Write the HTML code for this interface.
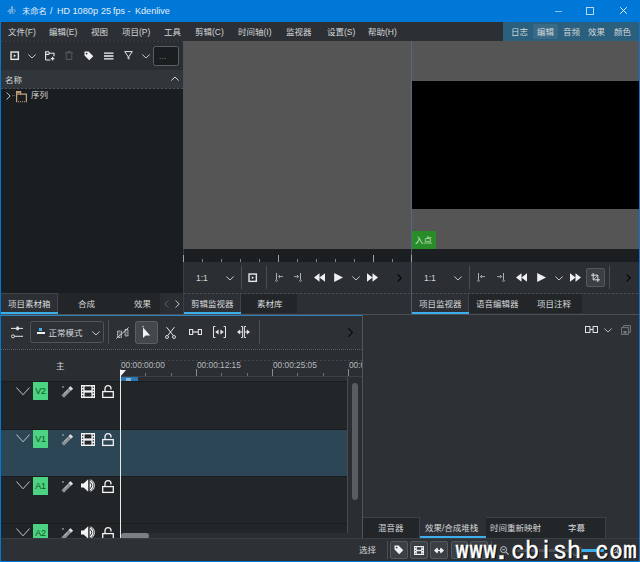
<!DOCTYPE html>
<html lang="zh-CN">
<head>
<meta charset="utf-8">
<title>未命名 / HD 1080p 25 fps - Kdenlive</title>
<style>
*{box-sizing:border-box;margin:0;padding:0}
html,body{width:640px;height:562px;overflow:hidden;background:#2c3034}
body{position:relative;font-family:"Liberation Sans","Noto Sans CJK SC",sans-serif;font-size:8.5px;color:#d4d7d9;line-height:1}
.abs{position:absolute}
.t{position:absolute;white-space:nowrap;line-height:10px;height:10px}
svg{position:absolute;overflow:visible}
/* title */
#title{left:0;top:0;width:640px;height:22px;background:#0078d7}
/* menu */
#menu{left:0;top:22px;width:640px;height:19px;background:#2c3034}
#ws{left:503px;top:22px;width:136px;height:19px;background:#2a5f7d}
/* frame */
#lb{left:0;top:22px;width:1px;height:540px;background:#0078d7}
#rb{left:639px;top:22px;width:1px;height:540px;background:#1572c4}
#bb{left:0;top:560.5px;width:640px;height:1.5px;background:#0078d7}
/* bin */
#bintb{left:1px;top:41px;width:182px;height:29px;background:#2a2e32}
#binhd{left:1px;top:70px;width:182px;height:19px;background:#31363b}
#bintree{left:1px;top:89px;width:182px;height:204px;background:#1b1e20}
#bintabs{left:1px;top:293px;width:182px;height:21px;background:#232629}
.tab{position:absolute;top:293px;height:21px;background:#2c3034;border-top:1px solid #3f444a;border-right:1px solid #3f444a}
.tabu{position:absolute;height:2px;background:#3daee9;top:311.5px}
.itab{position:absolute;top:294px;height:19px;background:#232629}
/* monitors */
.mon{position:absolute;top:41px;height:208px;background:#555555}
.rul{position:absolute;top:249px;height:13px;background:#1c1f22}
.mtb{position:absolute;top:262px;height:31px;background:#2b2f33}
.sep{position:absolute;width:1px;background:#4a4f54}
.tick{position:absolute;width:1px;background:#7f8386}
/* timeline */
#tl{left:1px;top:316px;width:361px;height:222px;background:#2a2e32}
#tltb{left:1px;top:316px;width:361px;height:33px;background:#2d3135}
#tracks{left:120px;top:381px;width:228px;height:157px;background:#232629}
.trk{position:absolute;left:1px;width:347px}
.tag{position:absolute;left:33px;width:15px;height:18px;background:#4bd282;color:#0f5a20;font-size:9px;text-align:center;line-height:19.5px;letter-spacing:-0.3px}
/* right */
#rp{left:363px;top:316px;width:276px;height:222px;background:#2d3135}
#sb{left:1px;top:538px;width:638px;height:23px;background:#2d3135}
.btn{position:absolute;background:#3b4045;border:1px solid #54595e;border-radius:2px}
</style>
</head>
<body>
<!-- TITLE BAR -->
<div id="title" class="abs"></div>
<svg style="left:6px;top:5px" width="11" height="10" viewBox="0 0 11 10"><path d="M1 6.4L3.2 4.6L2.8 3.4L4.2 4.2L5 3.6V1.2H7V3.8L9.4 4.8L10 6.2L8.6 7.8L7 9H2.8L3.8 7.6L1 6.8Z" fill="#5ea9e2"/><rect x="5.3" y="1.9" width="1.4" height="1.2" fill="#c9a98a"/><path d="M7.2 5L8.6 6.2L7.2 7.4" fill="none" stroke="#1d4f8a" stroke-width="0.9"/><rect x="5.2" y="7.6" width="1" height="1" fill="#1d4f8a"/></svg>
<div class="t" style="left:22px;top:6px;font-size:8.3px;color:#e4effa">未命名</div><div class="t" style="left:50px;top:6px;font-size:9px;color:#e4effa">/</div><div class="t" style="left:57px;top:6px;font-size:9px;color:#e4effa">HD</div><div class="t" style="left:72.5px;top:6px;font-size:9.2px;color:#e4effa">1080p</div><div class="t" style="left:101px;top:6px;font-size:9px;color:#e4effa">25</div><div class="t" style="left:113px;top:6px;font-size:9px;color:#e4effa">fps</div><div class="t" style="left:127.5px;top:6px;font-size:9px;color:#e4effa">-</div><div class="t" style="left:135px;top:6px;font-size:9.1px;color:#e4effa">Kdenlive</div>
<svg style="left:555px;top:10.5px" width="7" height="1" viewBox="0 0 7 1"><rect width="7" height="0.8" fill="#b5d4f1"/></svg>
<svg style="left:586px;top:6.5px" width="8" height="8" viewBox="0 0 8 8"><rect x="0.5" y="0.5" width="7" height="7" fill="none" stroke="#cfe3f6" stroke-width="0.9"/></svg>
<svg style="left:619.5px;top:7px" width="7" height="7" viewBox="0 0 7 7"><path d="M0.2 0.2L6.8 6.8M6.8 0.2L0.2 6.8" stroke="#ffffff" stroke-width="0.9"/></svg>
<!-- MENU -->
<div id="menu" class="abs"></div>
<div id="ws" class="abs"></div>
<div class="t" style="left:8px;top:27px">文件(F)</div>
<div class="t" style="left:49px;top:27px">编辑(E)</div>
<div class="t" style="left:91px;top:27px">视图</div>
<div class="t" style="left:122px;top:27px">项目(P)</div>
<div class="t" style="left:164px;top:27px">工具</div>
<div class="t" style="left:195px;top:27px">剪辑(C)</div>
<div class="t" style="left:238px;top:27px">时间轴(I)</div>
<div class="t" style="left:286px;top:27px">监视器</div>
<div class="t" style="left:327px;top:27px">设置(S)</div>
<div class="t" style="left:368px;top:27px">帮助(H)</div>
<div class="abs" style="left:533px;top:24px;width:25px;height:15px;background:rgba(255,255,255,.07);border-radius:2px"></div>
<div class="t" style="left:511px;top:27px">日志</div>
<div class="t" style="left:537px;top:27px">编辑</div>
<div class="t" style="left:563px;top:27px">音频</div>
<div class="t" style="left:588px;top:27px">效果</div>
<div class="t" style="left:614px;top:27px">颜色</div>

<!-- BIN -->
<div id="bintb" class="abs"></div>
<div id="binhd" class="abs"></div>
<div id="bintree" class="abs"></div>
<div id="bintabs" class="abs"></div>
<div class="abs" style="left:1px;top:88px;width:182px;height:1px;background:repeating-linear-gradient(90deg,#4d5257 0 2px,#2a2e32 2px 4px)"></div>
<div class="t" style="left:5px;top:75.2px">名称</div>
<div class="t" style="left:31px;top:90px">序列</div>
<div class="tab" style="left:1px;width:57px"></div>
<div class="tabu" style="left:1px;width:57px"></div>
<div class="abs" style="left:160px;top:293px;width:23px;height:21px;background:#2a2e32"></div>
<div class="t" style="left:8px;top:299px">项目素材箱</div>
<div class="t" style="left:78px;top:299px">合成</div>
<div class="t" style="left:134px;top:299px">效果</div>


<!-- bin toolbar icons -->
<div class="abs" style="left:1px;top:41px;width:182px;height:1px;background:repeating-linear-gradient(90deg,#3a3f44 0 2px,#25282b 2px 4px)"></div>
<svg style="left:10.2px;top:50.7px" width="9.4" height="9.4" viewBox="0 0 10 10"><rect x="1.1" y="1.1" width="7.8" height="7.8" fill="none" stroke="#e6e7e8" stroke-width="1.5"/><path d="M4 3.4L6.4 5L4 6.6Z" fill="#e6e7e8"/></svg>
<svg style="left:28px;top:53.5px" width="8" height="5" viewBox="0 0 8 5"><path d="M0.3 0.5L4 4L7.7 0.5" fill="none" stroke="#c4c6c8" stroke-width="1"/></svg>
<svg style="left:44.5px;top:50.5px" width="10" height="10" viewBox="0 0 10 10"><path d="M0.6 9V0.8H3.6L4.6 2.2H9V5.2M0.6 3.4H3.6L4.6 2.2M0.6 9H5.4" fill="none" stroke="#e6e7e8" stroke-width="1.1"/><path d="M7.6 5.8V9.4M5.8 7.6H9.4" stroke="#e6e7e8" stroke-width="1.1" fill="none"/></svg>
<svg style="left:65px;top:51px" width="8" height="9" viewBox="0 0 8 9"><path d="M0 1.8H8M2.8 1.8V0.5H5.2V1.8M1.2 1.8V8.5H6.8V1.8" fill="none" stroke="#565b60" stroke-width="1"/></svg>
<svg style="left:84px;top:50.5px" width="10" height="10" viewBox="0 0 10 10"><path d="M0.5 0.5H4.6L9.3 5.2L5.2 9.3L0.5 4.6Z" fill="#f0f1f2"/><circle cx="2.6" cy="2.6" r="0.9" fill="#2a2e32"/></svg>
<svg style="left:104px;top:51.5px" width="10" height="8" viewBox="0 0 10 8"><path d="M0 1.1H9.5M0 4H9.5M0 6.9H9.5" stroke="#f0f1f2" stroke-width="1.3" fill="none"/></svg>
<svg style="left:124px;top:51px" width="9" height="9" viewBox="0 0 9 9"><path d="M0.7 0.6H8.3L4.9 5.6V8.2L4.1 7.4V5.6Z" fill="none" stroke="#e6e7e8" stroke-width="1"/></svg>
<svg style="left:142px;top:53.5px" width="8" height="5" viewBox="0 0 8 5"><path d="M0.3 0.5L4 4L7.7 0.5" fill="none" stroke="#c4c6c8" stroke-width="1"/></svg>
<div class="abs" style="left:153px;top:46px;width:26px;height:20px;background:#1b1e20;border:1px solid #5a5f64;border-radius:2.5px"></div>
<div class="t" style="left:159px;top:52px;color:#9aa0a5;font-size:8px;letter-spacing:0.3px">...</div>
<!-- header caret -->
<svg style="left:171px;top:76px" width="8" height="5" viewBox="0 0 8 5"><path d="M0.3 4.5L4 1L7.7 4.5" fill="none" stroke="#d0d2d4" stroke-width="1"/></svg>
<!-- tree row -->
<svg style="left:6px;top:91.5px" width="5" height="8" viewBox="0 0 5 8"><path d="M0.5 0.4L4.2 4L0.5 7.6" fill="none" stroke="#c4c6c8" stroke-width="1"/></svg>
<div class="abs" style="left:12px;top:95px;width:3px;height:1px;background:#4c5156"></div>
<svg style="left:16.2px;top:90.8px" width="11" height="11.4" viewBox="0 0 11 11.4"><path d="M0.6 10.8V0.7H4.6V3.1H10.4V10.8" fill="none" stroke="#c4a07a" stroke-width="1.2"/><path d="M0.6 3.1H4.6" stroke="#c4a07a" stroke-width="1.2"/><path d="M0.6 1.3H4.6" stroke="#c4a07a" stroke-width="1.2"/><path d="M0 10.8H11" stroke="#c4a07a" stroke-width="1.1" stroke-dasharray="1.1 0.9"/></svg>
<!-- tab arrows -->
<svg style="left:164px;top:299.5px" width="5" height="8" viewBox="0 0 5 8"><path d="M4.4 0.4L0.8 4L4.4 7.6" fill="none" stroke="#5e6368" stroke-width="1"/></svg>
<svg style="left:175px;top:299.5px" width="5" height="8" viewBox="0 0 5 8"><path d="M0.6 0.4L4.2 4L0.6 7.6" fill="none" stroke="#c4c6c8" stroke-width="1"/></svg>

<!-- CLIP MONITOR -->
<div class="abs" style="left:183px;top:41px;width:1px;height:208px;background:#4a5563;z-index:2"></div>
<div class="abs" style="left:183px;top:249px;width:1px;height:65px;background:#3a3f45;z-index:2"></div>
<div class="mon" style="left:183px;width:228px"></div>
<div class="rul" style="left:183px;width:228px"></div>
<div class="mtb" style="left:183px;width:228px"></div>
<div class="tick" style="left:183.3px;top:255px;height:7px;background:#a0a3a6;z-index:3"></div><div class="tick" style="left:202.2px;top:259px;height:3px;background:#7f8386;z-index:3"></div><div class="tick" style="left:221.2px;top:259px;height:3px;background:#7f8386;z-index:3"></div><div class="tick" style="left:240.1px;top:259px;height:3px;background:#7f8386;z-index:3"></div><div class="tick" style="left:259.0px;top:259px;height:3px;background:#7f8386;z-index:3"></div><div class="tick" style="left:278.0px;top:255px;height:7px;background:#a0a3a6;z-index:3"></div><div class="tick" style="left:296.9px;top:259px;height:3px;background:#7f8386;z-index:3"></div><div class="tick" style="left:315.8px;top:259px;height:3px;background:#7f8386;z-index:3"></div><div class="tick" style="left:334.7px;top:259px;height:3px;background:#7f8386;z-index:3"></div><div class="tick" style="left:353.7px;top:259px;height:3px;background:#7f8386;z-index:3"></div><div class="tick" style="left:372.6px;top:255px;height:7px;background:#a0a3a6;z-index:3"></div><div class="tick" style="left:391.5px;top:259px;height:3px;background:#7f8386;z-index:3"></div><div class="tick" style="left:410.5px;top:255px;height:7px;background:#a0a3a6;z-index:3"></div>
<div class="t" style="left:196px;top:273px">1:1</div>
<svg style="left:225.5px;top:275.5px" width="8" height="5" viewBox="0 0 8 5"><path d="M0.3 0.5L4 4L7.7 0.5" fill="none" stroke="#c4c6c8" stroke-width="1"/></svg>
<div class="sep" style="left:241px;top:266px;height:23px"></div>
<svg style="left:248.4px;top:272.7px" width="9.4" height="9.4" viewBox="0 0 10 10"><rect x="1.1" y="1.1" width="7.8" height="7.8" fill="none" stroke="#e6e7e8" stroke-width="1.5"/><path d="M4 3.4L6.4 5L4 6.6Z" fill="#e6e7e8"/></svg>
<div class="sep" style="left:266px;top:266px;height:23px"></div>
<svg style="left:274.5px;top:273px" width="10" height="9" viewBox="0 0 10 9"><path d="M1.5 0V6.6" stroke="#aeb2b5" stroke-width="1" fill="none"/><circle cx="1.5" cy="7.6" r="0.9" fill="none" stroke="#aeb2b5" stroke-width="0.8"/><path d="M3.4 3.6H8 M5 2L3.4 3.6L5 5.2" stroke="#aeb2b5" stroke-width="0.9" fill="none"/></svg>
<svg style="left:292.0px;top:273px" width="10" height="9" viewBox="0 0 10 9"><path d="M8.5 0V6.6" stroke="#aeb2b5" stroke-width="1" fill="none"/><circle cx="8.5" cy="7.6" r="0.9" fill="none" stroke="#aeb2b5" stroke-width="0.8"/><path d="M2 3.6H6.6 M5 2L6.6 3.6L5 5.2" stroke="#aeb2b5" stroke-width="0.9" fill="none"/></svg>
<svg style="left:313.5px;top:273px" width="11" height="9" viewBox="0 0 11 9"><path d="M5.5 0.3V8.7L0 4.5Z M11 0.3V8.7L5.5 4.5Z" fill="#eff0f1"/></svg>
<svg style="left:333.5px;top:273px" width="9" height="9" viewBox="0 0 9 9"><path d="M0.2 0V9L9 4.5Z" fill="#eff0f1"/></svg>
<svg style="left:352px;top:275.5px" width="8" height="5" viewBox="0 0 8 5"><path d="M0.3 0.5L4 4L7.7 0.5" fill="none" stroke="#c4c6c8" stroke-width="1"/></svg>
<svg style="left:367px;top:273px" width="11" height="9" viewBox="0 0 11 9"><path d="M0 0.3V8.7L5.5 4.5Z M5.5 0.3V8.7L11 4.5Z" fill="#eff0f1"/></svg>
<svg style="left:396.5px;top:274px" width="5" height="8" viewBox="0 0 5 8"><path d="M0.6 0.4L4.2 4L0.6 7.6" fill="none" stroke="#050505" stroke-width="1.1"/></svg>
<div class="itab" style="left:241px;width:56px"></div>
<div class="tab" style="left:184px;width:57px"></div>
<div class="tabu" style="left:183.5px;width:57px"></div>
<div class="t" style="left:191px;top:299px">剪辑监视器</div>
<div class="t" style="left:257px;top:299px">素材库</div>

<!-- PROJECT MONITOR -->
<div class="mon" style="left:411px;width:228px"></div>
<div class="abs" style="left:411px;top:41px;width:1px;height:208px;background:#586880;z-index:2"></div><div class="abs" style="left:411px;top:249px;width:1px;height:65px;background:#555a60;z-index:2"></div>
<div class="abs" style="left:412px;top:81px;width:227px;height:128px;background:#000"></div>
<div class="abs" style="left:412px;top:231px;width:24px;height:18px;background:#288c28"></div>
<div class="t" style="left:415px;top:235px;color:#cfe8cf">入点</div>
<div class="rul" style="left:412px;width:227px"></div>
<div class="mtb" style="left:412px;width:227px"></div>
<div class="t" style="left:424px;top:273px">1:1</div>
<svg style="left:453.5px;top:275.5px" width="8" height="5" viewBox="0 0 8 5"><path d="M0.3 0.5L4 4L7.7 0.5" fill="none" stroke="#c4c6c8" stroke-width="1"/></svg>
<div class="sep" style="left:468.5px;top:266px;height:23px"></div>
<svg style="left:477.0px;top:273px" width="10" height="9" viewBox="0 0 10 9"><path d="M1.5 0V6.6" stroke="#aeb2b5" stroke-width="1" fill="none"/><circle cx="1.5" cy="7.6" r="0.9" fill="none" stroke="#aeb2b5" stroke-width="0.8"/><path d="M3.4 3.6H8 M5 2L3.4 3.6L5 5.2" stroke="#aeb2b5" stroke-width="0.9" fill="none"/></svg>
<svg style="left:495.0px;top:273px" width="10" height="9" viewBox="0 0 10 9"><path d="M8.5 0V6.6" stroke="#aeb2b5" stroke-width="1" fill="none"/><circle cx="8.5" cy="7.6" r="0.9" fill="none" stroke="#aeb2b5" stroke-width="0.8"/><path d="M2 3.6H6.6 M5 2L6.6 3.6L5 5.2" stroke="#aeb2b5" stroke-width="0.9" fill="none"/></svg>
<svg style="left:516px;top:273px" width="11" height="9" viewBox="0 0 11 9"><path d="M5.5 0.3V8.7L0 4.5Z M11 0.3V8.7L5.5 4.5Z" fill="#eff0f1"/></svg>
<svg style="left:536.5px;top:273px" width="9" height="9" viewBox="0 0 9 9"><path d="M0.2 0V9L9 4.5Z" fill="#eff0f1"/></svg>
<svg style="left:554.5px;top:275.5px" width="8" height="5" viewBox="0 0 8 5"><path d="M0.3 0.5L4 4L7.7 0.5" fill="none" stroke="#c4c6c8" stroke-width="1"/></svg>
<svg style="left:569.5px;top:273px" width="11" height="9" viewBox="0 0 11 9"><path d="M0 0.3V8.7L5.5 4.5Z M5.5 0.3V8.7L11 4.5Z" fill="#eff0f1"/></svg>
<div class="btn" style="left:586px;top:268px;width:18.5px;height:18.5px"></div>
<svg style="left:591px;top:273px" width="9" height="9" viewBox="0 0 10 10"><path d="M2.4 0V7.6H10 M0 2.4H7.6V10" fill="none" stroke="#eff0f1" stroke-width="1"/><path d="M3 7L7 3" stroke="#eff0f1" stroke-width="0.7"/></svg>
<div class="sep" style="left:609px;top:266px;height:23px"></div>
<svg style="left:625.5px;top:274px" width="5" height="8" viewBox="0 0 5 8"><path d="M0.6 0.4L4.2 4L0.6 7.6" fill="none" stroke="#050505" stroke-width="1.1"/></svg>
<div class="itab" style="left:469px;width:113px"></div>
<div class="tab" style="left:412px;width:57px"></div>
<div class="tabu" style="left:412px;width:57px"></div>
<div class="t" style="left:419px;top:299px">项目监视器</div>
<div class="t" style="left:476px;top:299px">语音编辑器</div>
<div class="t" style="left:537px;top:299px">项目注释</div>

<!-- separator line -->
<div class="abs" style="left:184px;top:293px;width:455px;height:1px;background:repeating-linear-gradient(90deg,#474c51 0 2px,#33383c 2px 4px);z-index:1"></div>
<div class="abs" style="left:0;top:314px;width:640px;height:1px;background:#4b5055"></div>
<div class="abs" style="left:0;top:315px;width:362px;height:1px;background:#2a82be"></div>
<div class="abs" style="left:362px;top:315px;width:278px;height:1px;background:#2d3135"></div>

<!-- TIMELINE -->
<div id="tl" class="abs"></div>
<div id="tltb" class="abs"></div>
<div class="abs" style="left:362px;top:315px;width:1px;height:223px;background:#50555a"></div>
<svg style="left:11px;top:325px" width="12" height="14" viewBox="0 0 12 14"><path d="M0 3.4H12" stroke="#e6e7e8" stroke-width="1"/><rect x="5.4" y="1.6" width="2.4" height="3.6" fill="#e6e7e8"/><path d="M3.5 11.3H12" stroke="#e6e7e8" stroke-width="1"/><circle cx="2" cy="11.3" r="1.5" fill="none" stroke="#e6e7e8" stroke-width="0.9"/></svg>
<div class="abs" style="left:30px;top:321px;width:74px;height:22px;background:#2e3236;border:1px solid #50555a;border-radius:2.5px"></div>
<div class="abs" style="left:39px;top:327.5px;width:3px;height:3px;background:#3daee9"></div>
<div class="abs" style="left:36.5px;top:332px;width:8px;height:2px;background:#eff0f1"></div>
<div class="t" style="left:48.5px;top:327.5px">正常模式</div>
<svg style="left:92px;top:330.5px" width="8" height="5" viewBox="0 0 8 5" preserveAspectRatio="none"><path d="M0.3 0.5L4 4L7.7 0.5" fill="none" stroke="#c4c6c8" stroke-width="1"/></svg>
<div class="sep" style="left:107.5px;top:320px;height:24px"></div>
<svg style="left:116px;top:326.5px" width="13" height="12" viewBox="0 0 13 12"><path d="M1.5 4H5.5V10.5H1.5Z M9 2.5H12V9H9Z" fill="rgba(200,203,206,.25)" stroke="#c0c3c6" stroke-width="1" stroke-dasharray="1.2 0.5"/><path d="M0.3 11.5L12.7 0.5" stroke="#c8cacc" stroke-width="1"/></svg>
<div class="btn" style="left:135px;top:321px;width:23px;height:22.5px;background:#43484d;border-color:#5b6065;border-radius:2.5px"></div>
<svg style="left:142px;top:325.5px" width="9" height="13" viewBox="0 0 9 13"><path d="M1 1.6V12L3.6 9.4H8.2Z" fill="#f4f5f6"/><rect x="0.4" y="0" width="1.2" height="1.2" fill="#e0e0e0"/></svg>
<svg style="left:165px;top:326.5px" width="11" height="12" viewBox="0 0 11 12"><path d="M1.6 0.2L8.3 8.6 M9.4 0.2L2.7 8.6" stroke="#e6e7e8" stroke-width="1" fill="none"/><circle cx="2" cy="10" r="1.5" fill="none" stroke="#e6e7e8" stroke-width="0.9"/><circle cx="9" cy="10" r="1.5" fill="none" stroke="#e6e7e8" stroke-width="0.9"/></svg>
<svg style="left:188.5px;top:329px" width="13" height="6" viewBox="0 0 13 6"><rect x="0.5" y="0.5" width="3.2" height="5" fill="none" stroke="#e6e7e8" stroke-width="1"/><rect x="9.3" y="0.5" width="3.2" height="5" fill="none" stroke="#e6e7e8" stroke-width="1"/><path d="M3.7 3H9.3" stroke="#e6e7e8" stroke-width="1.2"/></svg>
<svg style="left:213px;top:326px" width="13" height="12" viewBox="0 0 13 12"><path d="M2.4 0.5H0.5V11.5H2.4 M10.6 0.5H12.5V11.5H10.6" fill="none" stroke="#e6e7e8" stroke-width="1"/><path d="M2.2 6L5.6 3.4V8.6Z M10.8 6L7.4 3.4V8.6Z" fill="#e6e7e8"/></svg>
<svg style="left:237px;top:326px" width="13" height="12" viewBox="0 0 13 12"><path d="M4 0.5H5.6V11.5H4 M9 0.5H7.4V11.5H9" fill="none" stroke="#e6e7e8" stroke-width="1"/><path d="M0 6L3.2 3.4V8.6Z M13 6L9.8 3.4V8.6Z" fill="#e6e7e8"/><path d="M2 6H5.4 M7.6 6H11" stroke="#e6e7e8" stroke-width="1"/></svg>
<div class="sep" style="left:258.5px;top:320px;height:24px"></div>
<svg style="left:347.5px;top:328px" width="5" height="9" viewBox="0 0 5 9"><path d="M0.5 0.4L4.3 4.5L0.5 8.6" fill="none" stroke="#050505" stroke-width="1.1"/></svg>
<div class="abs" style="left:1px;top:348.5px;width:361px;height:1px;background:repeating-linear-gradient(90deg,#5a5f64 0 1px,#2a2e32 1px 2px)"></div>
<div class="abs" style="left:120px;top:360px;width:242px;height:17px;background:#2b2f33"></div>
<div class="abs" style="left:120px;top:360px;width:242px;height:1px;background:repeating-linear-gradient(90deg,#43484d 0 2px,#2a2e32 2px 4px)"></div>
<div class="abs" style="left:120px;top:376px;width:242px;height:1px;background:#3b4045"></div>
<div class="abs" style="left:120px;top:369px;width:1px;height:7px;background:#8a8e92"></div>
<div class="t" style="left:121px;top:359.8px;color:#b9bcbf;font-size:8.3px;width:60px;overflow:hidden">00:00:00:00</div>
<div class="abs" style="left:145.3px;top:373px;width:1px;height:3px;background:#6d7176"></div>
<div class="abs" style="left:170.7px;top:373px;width:1px;height:3px;background:#6d7176"></div>
<div class="abs" style="left:196px;top:369px;width:1px;height:7px;background:#8a8e92"></div>
<div class="t" style="left:197px;top:359.8px;color:#b9bcbf;font-size:8.3px;width:60px;overflow:hidden">00:00:12:15</div>
<div class="abs" style="left:221.3px;top:373px;width:1px;height:3px;background:#6d7176"></div>
<div class="abs" style="left:246.7px;top:373px;width:1px;height:3px;background:#6d7176"></div>
<div class="abs" style="left:272px;top:369px;width:1px;height:7px;background:#8a8e92"></div>
<div class="t" style="left:273px;top:359.8px;color:#b9bcbf;font-size:8.3px;width:60px;overflow:hidden">00:00:25:05</div>
<div class="abs" style="left:297.3px;top:373px;width:1px;height:3px;background:#6d7176"></div>
<div class="abs" style="left:322.7px;top:373px;width:1px;height:3px;background:#6d7176"></div>
<div class="abs" style="left:348px;top:369px;width:1px;height:7px;background:#8a8e92"></div>
<div class="t" style="left:349px;top:359.8px;color:#b9bcbf;font-size:8.3px;width:13px;overflow:hidden">00:00:37:20</div>
<div class="abs" style="left:121px;top:377px;width:17px;height:4.5px;background:#2b78b4"></div>
<div class="abs" style="left:126px;top:378px;width:5px;height:3px;background:#9fc4df;opacity:.8"></div>
<div class="abs" style="left:1px;top:381px;width:119px;height:47.5px;background:#222528;overflow:hidden"></div>
<div class="abs" style="left:120px;top:381px;width:226.5px;height:47.5px;background:#232629"></div>
<div class="abs" style="left:1px;top:381px;width:345.5px;height:1px;background:#1a1c1e"></div>
<div class="abs" style="left:0;top:381px;width:130px;height:47.5px;overflow:hidden">
<svg style="left:16px;top:5.5px" width="14" height="9" viewBox="0 0 14 9"><path d="M0.4 0.5L7 7.8L13.6 0.5" fill="none" stroke="#c4c6c8" stroke-width="1"/></svg>
<div class="tag" style="top:1px">V2</div>
<svg style="left:61px;top:4px" width="13" height="13" viewBox="0 0 13 13"><path d="M0.4 10.2L9.4 1.2L12 3.8L3 12.8Z" fill="#8b9095"/><path d="M7.6 3L9.4 1.2L12 3.8L10.2 5.6Z" fill="#dcdedf"/><path d="M3.4 8.6L6.6 5.4" stroke="#c9cccf" stroke-width="0.8"/><rect x="1.2" y="1.2" width="1.5" height="1.5" fill="#a9adb0"/></svg>
<svg style="left:80.5px;top:4px" width="14" height="13" viewBox="0 0 14 13"><rect x="0" y="0" width="14" height="13" fill="#f2f3f4"/><rect x="3.6" y="1.4" width="6.8" height="4" fill="#26292c"/><rect x="3.6" y="7.6" width="6.8" height="4" fill="#26292c"/><g fill="#26292c"><rect x="1.1" y="1.6" width="1.2" height="1.4"/><rect x="1.1" y="4.4" width="1.2" height="1.4"/><rect x="1.1" y="7.2" width="1.2" height="1.4"/><rect x="1.1" y="10" width="1.2" height="1.4"/><rect x="11.7" y="1.6" width="1.2" height="1.4"/><rect x="11.7" y="4.4" width="1.2" height="1.4"/><rect x="11.7" y="7.2" width="1.2" height="1.4"/><rect x="11.7" y="10" width="1.2" height="1.4"/></g></svg>
<svg style="left:101.5px;top:4px" width="12" height="13" viewBox="0 0 12 13"><rect x="0.7" y="6.6" width="10.6" height="5.8" fill="none" stroke="#f2f3f4" stroke-width="1.3"/><path d="M3 6.6V3.6A3 3 0 0 1 9 3.6V4.4" fill="none" stroke="#f2f3f4" stroke-width="1.3"/></svg>
</div>
<div class="abs" style="left:1px;top:428.5px;width:119px;height:47px;background:#2c4656;overflow:hidden"></div>
<div class="abs" style="left:120px;top:428.5px;width:226.5px;height:47px;background:#2c4656"></div>
<div class="abs" style="left:1px;top:428.5px;width:345.5px;height:1px;background:#1a1c1e"></div>
<div class="abs" style="left:0;top:428.5px;width:130px;height:47px;overflow:hidden">
<svg style="left:16px;top:5.5px" width="14" height="9" viewBox="0 0 14 9"><path d="M0.4 0.5L7 7.8L13.6 0.5" fill="none" stroke="#c4c6c8" stroke-width="1"/></svg>
<div class="tag" style="top:1px">V1</div>
<svg style="left:61px;top:4px" width="13" height="13" viewBox="0 0 13 13"><path d="M0.4 10.2L9.4 1.2L12 3.8L3 12.8Z" fill="#8b9095"/><path d="M7.6 3L9.4 1.2L12 3.8L10.2 5.6Z" fill="#dcdedf"/><path d="M3.4 8.6L6.6 5.4" stroke="#c9cccf" stroke-width="0.8"/><rect x="1.2" y="1.2" width="1.5" height="1.5" fill="#a9adb0"/></svg>
<svg style="left:80.5px;top:4px" width="14" height="13" viewBox="0 0 14 13"><rect x="0" y="0" width="14" height="13" fill="#f2f3f4"/><rect x="3.6" y="1.4" width="6.8" height="4" fill="#26292c"/><rect x="3.6" y="7.6" width="6.8" height="4" fill="#26292c"/><g fill="#26292c"><rect x="1.1" y="1.6" width="1.2" height="1.4"/><rect x="1.1" y="4.4" width="1.2" height="1.4"/><rect x="1.1" y="7.2" width="1.2" height="1.4"/><rect x="1.1" y="10" width="1.2" height="1.4"/><rect x="11.7" y="1.6" width="1.2" height="1.4"/><rect x="11.7" y="4.4" width="1.2" height="1.4"/><rect x="11.7" y="7.2" width="1.2" height="1.4"/><rect x="11.7" y="10" width="1.2" height="1.4"/></g></svg>
<svg style="left:101.5px;top:4px" width="12" height="13" viewBox="0 0 12 13"><rect x="0.7" y="6.6" width="10.6" height="5.8" fill="none" stroke="#f2f3f4" stroke-width="1.3"/><path d="M3 6.6V3.6A3 3 0 0 1 9 3.6V4.4" fill="none" stroke="#f2f3f4" stroke-width="1.3"/></svg>
</div>
<div class="abs" style="left:1px;top:475.5px;width:119px;height:47px;background:#222528;overflow:hidden"></div>
<div class="abs" style="left:120px;top:475.5px;width:226.5px;height:47px;background:#232629"></div>
<div class="abs" style="left:1px;top:475.5px;width:345.5px;height:1px;background:#1a1c1e"></div>
<div class="abs" style="left:0;top:475.5px;width:130px;height:47px;overflow:hidden">
<svg style="left:16px;top:5.5px" width="14" height="9" viewBox="0 0 14 9"><path d="M0.4 0.5L7 7.8L13.6 0.5" fill="none" stroke="#c4c6c8" stroke-width="1"/></svg>
<div class="tag" style="top:1px">A1</div>
<svg style="left:61px;top:4px" width="13" height="13" viewBox="0 0 13 13"><path d="M0.4 10.2L9.4 1.2L12 3.8L3 12.8Z" fill="#8b9095"/><path d="M7.6 3L9.4 1.2L12 3.8L10.2 5.6Z" fill="#dcdedf"/><path d="M3.4 8.6L6.6 5.4" stroke="#c9cccf" stroke-width="0.8"/><rect x="1.2" y="1.2" width="1.5" height="1.5" fill="#a9adb0"/></svg>
<svg style="left:80.5px;top:3.5px" width="14" height="13" viewBox="0 0 14 13"><path d="M0 4.4H2.6L7.2 0.3V12.7L2.6 8.6H0Z" fill="#f2f3f4"/><path d="M8.6 1.2A5.6 5.6 0 0 1 8.6 11.8Z" fill="#f2f3f4"/><path d="M8.6 3.2A3.6 3.6 0 0 1 8.6 9.8" fill="none" stroke="#26292c" stroke-width="1"/><path d="M9.6 0.6A6.4 6.4 0 0 1 9.6 12.4" fill="none" stroke="#f2f3f4" stroke-width="0.9"/></svg>
<svg style="left:101.5px;top:4px" width="12" height="13" viewBox="0 0 12 13"><rect x="0.7" y="6.6" width="10.6" height="5.8" fill="none" stroke="#f2f3f4" stroke-width="1.3"/><path d="M3 6.6V3.6A3 3 0 0 1 9 3.6V4.4" fill="none" stroke="#f2f3f4" stroke-width="1.3"/></svg>
</div>
<div class="abs" style="left:1px;top:522.5px;width:119px;height:15.5px;background:#222528;overflow:hidden"></div>
<div class="abs" style="left:120px;top:522.5px;width:226.5px;height:15.5px;background:#232629"></div>
<div class="abs" style="left:1px;top:522.5px;width:345.5px;height:1px;background:#1a1c1e"></div>
<div class="abs" style="left:0;top:522.5px;width:130px;height:15.5px;overflow:hidden">
<svg style="left:16px;top:5.5px" width="14" height="9" viewBox="0 0 14 9"><path d="M0.4 0.5L7 7.8L13.6 0.5" fill="none" stroke="#c4c6c8" stroke-width="1"/></svg>
<div class="tag" style="top:1px">A2</div>
<svg style="left:61px;top:4px" width="13" height="13" viewBox="0 0 13 13"><path d="M0.4 10.2L9.4 1.2L12 3.8L3 12.8Z" fill="#8b9095"/><path d="M7.6 3L9.4 1.2L12 3.8L10.2 5.6Z" fill="#dcdedf"/><path d="M3.4 8.6L6.6 5.4" stroke="#c9cccf" stroke-width="0.8"/><rect x="1.2" y="1.2" width="1.5" height="1.5" fill="#a9adb0"/></svg>
<svg style="left:80.5px;top:3.5px" width="14" height="13" viewBox="0 0 14 13"><path d="M0 4.4H2.6L7.2 0.3V12.7L2.6 8.6H0Z" fill="#f2f3f4"/><path d="M8.6 1.2A5.6 5.6 0 0 1 8.6 11.8Z" fill="#f2f3f4"/><path d="M8.6 3.2A3.6 3.6 0 0 1 8.6 9.8" fill="none" stroke="#26292c" stroke-width="1"/><path d="M9.6 0.6A6.4 6.4 0 0 1 9.6 12.4" fill="none" stroke="#f2f3f4" stroke-width="0.9"/></svg>
<svg style="left:101.5px;top:4px" width="12" height="13" viewBox="0 0 12 13"><rect x="0.7" y="6.6" width="10.6" height="5.8" fill="none" stroke="#f2f3f4" stroke-width="1.3"/><path d="M3 6.6V3.6A3 3 0 0 1 9 3.6V4.4" fill="none" stroke="#f2f3f4" stroke-width="1.3"/></svg>
</div>
<div class="abs" style="left:120px;top:370px;width:1px;height:168px;background:#e8e9ea"></div>
<svg style="left:120px;top:370px" width="6" height="7" viewBox="0 0 6 7"><path d="M0 0H6L0 7Z" fill="#f4f5f6"/></svg>
<div class="abs" style="left:346.5px;top:377px;width:15.5px;height:161px;background:#2a2e32"></div>
<div class="abs" style="left:347px;top:377px;width:1px;height:156px;background:#474c51"></div>
<div class="abs" style="left:352px;top:383px;width:5.5px;height:116.5px;background:#595d61;border-radius:3px"></div>
<div class="abs" style="left:121px;top:533px;width:226px;height:5px;background:#2a2e32"></div>
<div class="abs" style="left:120px;top:533px;width:1px;height:5px;background:#e8e9ea"></div>
<div class="abs" style="left:121px;top:533px;width:28px;height:5.5px;background:#7b7f83;border-radius:3px"></div>
<div class="t" style="left:56px;top:361px">主</div>

<!-- RIGHT PANEL -->
<div id="rp" class="abs"></div>
<svg style="left:585px;top:326px" width="13" height="7" viewBox="0 0 13 7"><rect x="0.5" y="0.5" width="4.4" height="6" fill="none" stroke="#e0e1e2" stroke-width="1"/><rect x="8.1" y="0.5" width="4.4" height="6" fill="none" stroke="#e0e1e2" stroke-width="1"/><path d="M4.9 3.5H8.1" stroke="#e0e1e2" stroke-width="1.2"/></svg>
<svg style="left:604px;top:327.5px" width="8" height="5" viewBox="0 0 8 5"><path d="M0.3 0.5L4 4L7.7 0.5" fill="none" stroke="#b4b7ba" stroke-width="1"/></svg>
<svg style="left:620.5px;top:324.5px" width="10" height="10" viewBox="0 0 10 10"><path d="M2.6 2.6V0.6H9.4V7.4H7.4" fill="none" stroke="#73787d" stroke-width="1"/><rect x="0.6" y="2.6" width="6.8" height="6.8" fill="none" stroke="#73787d" stroke-width="1"/><rect x="2.4" y="6" width="3.2" height="2.6" fill="#73787d"/></svg>
<div class="abs" style="left:363px;top:516.5px;width:57px;height:21.5px;background:#232629;border-top:1px solid #3d4247;border-right:1px solid #3d4247"></div>
<div class="abs" style="left:486px;top:516.5px;width:119.5px;height:21.5px;background:#232629;border-top:1px solid #3d4247;border-right:1px solid #3d4247"></div>
<div class="abs" style="left:420px;top:536px;width:66px;height:2px;background:#3daee9"></div>
<div class="t" style="left:378px;top:523px">混音器</div>
<div class="t" style="left:425px;top:523px">效果/合成堆栈</div>
<div class="t" style="left:490px;top:523px">时间重新映射</div>
<div class="t" style="left:568px;top:523px">字幕</div>

<!-- STATUS BAR -->
<div id="sb" class="abs"></div>
<div class="t" style="left:359px;top:545px">选择</div>
<div class="abs" style="left:1px;top:538px;width:638px;height:1px;background:#3a3f44"></div>
<div class="sep" style="left:386.5px;top:541px;height:18px"></div>
<div class="btn" style="left:390px;top:541px;width:17.5px;height:17.5px"></div>
<div class="btn" style="left:410px;top:541px;width:17.5px;height:17.5px"></div>
<div class="btn" style="left:430px;top:541px;width:17.5px;height:17.5px"></div>
<div class="btn" style="left:450.5px;top:541px;width:17.5px;height:17.5px"></div>
<div class="btn" style="left:470px;top:541px;width:17.5px;height:17.5px"></div>
<svg style="left:394px;top:545px" width="10" height="10" viewBox="0 0 10 10"><path d="M0.5 0.5H4.6L9.3 5.2L5.2 9.3L0.5 4.6Z" fill="#f0f1f2"/><circle cx="2.6" cy="2.6" r="0.9" fill="#3b4045"/></svg>
<svg style="left:414px;top:545.5px" width="10" height="9" viewBox="0 0 10 9"><rect width="10" height="9" fill="#f0f1f2"/><rect x="2.8" y="1.2" width="4.4" height="2.6" fill="#3b4045"/><rect x="2.8" y="5.2" width="4.4" height="2.6" fill="#3b4045"/><g fill="#3b4045"><rect x="0.9" y="1.2" width="0.9" height="1"/><rect x="0.9" y="4" width="0.9" height="1"/><rect x="0.9" y="6.8" width="0.9" height="1"/><rect x="8.2" y="1.2" width="0.9" height="1"/><rect x="8.2" y="4" width="0.9" height="1"/><rect x="8.2" y="6.8" width="0.9" height="1"/></g></svg>
<svg style="left:434px;top:546.5px" width="10" height="7" viewBox="0 0 10 7"><path d="M0 3.5L3.2 0.4L4.6 3.5L3.2 6.6Z M10 3.5L6.8 0.4L5.4 3.5L6.8 6.6Z" fill="#f0f1f2"/><path d="M4 3.5H6" stroke="#f0f1f2" stroke-width="1"/></svg>
<div class="sep" style="left:491px;top:541px;height:18px"></div>
<svg style="left:500px;top:545.5px" width="9" height="9" viewBox="0 0 9 9"><circle cx="3.6" cy="3.6" r="3" fill="none" stroke="#c4c6c8" stroke-width="1"/><path d="M5.8 5.8L8.6 8.6" stroke="#c4c6c8" stroke-width="1.1"/><path d="M2.2 3.6H5" stroke="#c4c6c8" stroke-width="0.9"/></svg>
<div class="abs" style="left:516px;top:549px;width:66px;height:2.5px;background:#4a4f54;border-radius:1px"></div>
<div class="abs" style="left:580px;top:548.5px;width:24px;height:3px;background:#3daee9;border-radius:1px"></div>
<div class="abs" style="left:571px;top:544.5px;width:11px;height:11px;border-radius:6px;background:#31363b;border:1px solid #6a6f74"></div>
<svg style="left:611px;top:545.5px" width="9" height="9" viewBox="0 0 9 9"><circle cx="3.6" cy="3.6" r="3" fill="none" stroke="#c4c6c8" stroke-width="1"/><path d="M5.8 5.8L8.6 8.6" stroke="#c4c6c8" stroke-width="1.1"/><path d="M2.2 3.6H5M3.6 2.2V5" stroke="#c4c6c8" stroke-width="0.9"/></svg>
<div class="abs" id="wm" style="left:455px;top:533px;height:30px;white-space:nowrap;font-family:'IPAGothic','Liberation Mono',monospace;font-size:28px;line-height:30px;color:#fff;-webkit-text-stroke:0.45px #fff;text-shadow:1px 1px 0 #000,1px 0 0 #000,0 1px 0 #000;transform-origin:0 25px;transform:scaleY(0.88)">www.cbish.com</div>
<div id="lb" class="abs"></div><div id="rb" class="abs"></div><div id="bb" class="abs"></div>
</body>
</html>
